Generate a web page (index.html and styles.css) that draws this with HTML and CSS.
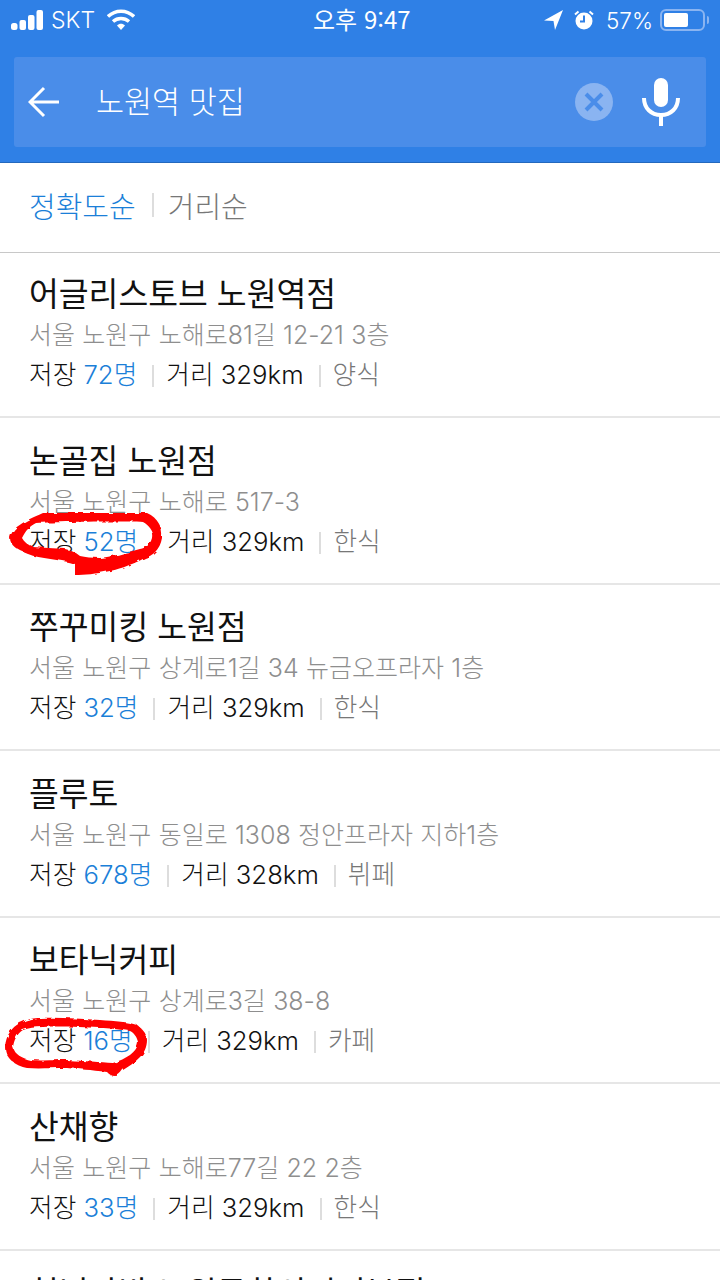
FILE: index.html
```html
<!DOCTYPE html>
<html lang="ko">
<head>
<meta charset="utf-8">
<title>노원역 맛집</title>
<link rel="stylesheet" href="styles.css">
</head>
<body>
<div class="phone">
  <header class="top">
    <div class="status">
      <div class="status-left">
        <svg class="signal" width="32" height="22" viewBox="0 0 32 22"><rect x="0" y="14" width="6.500" height="7" rx="2.500" fill="#fff"/><rect x="8.500" y="11" width="6.500" height="10" rx="2" fill="#fff"/><rect x="17" y="6" width="6.500" height="15" rx="2" fill="#fff"/><rect x="25.500" y="1" width="6.500" height="20" rx="2" fill="#fff"/></svg>
        <span class="carrier">SKT</span>
        <svg class="wifi" width="28" height="22" viewBox="0 0 28 22"><path d="M1 7.5C8.5 .5 19.5 .5 27 7.5" fill="none" stroke="#fff" stroke-width="3.4"/><path d="M6 12.5C10.5 8.5 17.5 8.5 22 12.5" fill="none" stroke="#fff" stroke-width="3.4"/><path d="M10 16.5C12.5 14 15.5 14 18 16.5L14 21Z" fill="#fff"/></svg>
      </div>
      <div class="clock">오후 9:47</div>
      <div class="status-right">
        <svg width="20" height="20" viewBox="0 0 20 20"><path d="M0 10.5 19 0 11 20 9.500 11Z" fill="#fff"/></svg>
        <svg class="alarm" width="20" height="20" viewBox="0 0 20 20"><circle cx="10" cy="11" r="8.500" fill="#fff"/><path d="M10 5.500V11.500H6" fill="none" stroke="#2f80e6" stroke-width="2"/><path d="M1 4.500 4.500 1.500M19 4.500 15.500 1.500" stroke="#fff" stroke-width="2"/></svg>
        <span class="pct">57%</span>
        <div class="battery"><div class="battery-fill"></div></div>
        <div class="battery-tip"></div>
      </div>
    </div>
    <div class="search">
      <svg class="back" width="32" height="32" viewBox="0 0 32 32"><path d="M31 16H3M16 2 2 16 16 30" fill="none" stroke="#fff" stroke-width="3"/></svg>
      <span class="query">노원역 맛집</span>
      <svg class="clear" width="38" height="38" viewBox="0 0 38 38"><circle cx="19" cy="19" r="19" fill="#8ab4f1"/><path d="M11 11 27 27M27 11 11 27" stroke="#4a8de9" stroke-width="4"/></svg>
      <svg class="mic" width="38" height="48" viewBox="0 0 38 48"><rect x="12" y="0" width="14" height="29" rx="7" fill="#fff"/><path d="M2 20C2 30 9 37 19 37S36 30 36 20" fill="none" stroke="#fff" stroke-width="4"/><rect x="17" y="36" width="4" height="12" fill="#fff"/></svg>
    </div>
  </header>

  <nav class="sort">
    <span class="sort-on">정확도순</span>
    <i class="bar"></i>
    <span class="sort-off">거리순</span>
  </nav>

  <main class="list">
    <article class="row">
      <h2>어글리스토브 노원역점</h2>
      <p class="addr">서울 노원구 노해로81길 12-21 3층</p>
      <p class="meta">저장 <b>72명</b><i class="bar"></i>거리 329km<i class="bar"></i><span>양식</span></p>
    </article>
    <article class="row">
      <h2>논골집 노원점</h2>
      <p class="addr">서울 노원구 노해로 517-3</p>
      <p class="meta">저장 <b>52명</b><i class="bar"></i>거리 329km<i class="bar"></i><span>한식</span></p>
    </article>
    <article class="row">
      <h2>쭈꾸미킹 노원점</h2>
      <p class="addr">서울 노원구 상계로1길 34 뉴금오프라자 1층</p>
      <p class="meta">저장 <b>32명</b><i class="bar"></i>거리 329km<i class="bar"></i><span>한식</span></p>
    </article>
    <article class="row">
      <h2>플루토</h2>
      <p class="addr">서울 노원구 동일로 1308 정안프라자 지하1층</p>
      <p class="meta">저장 <b>678명</b><i class="bar"></i>거리 328km<i class="bar"></i><span>뷔페</span></p>
    </article>
    <article class="row">
      <h2>보타닉커피</h2>
      <p class="addr">서울 노원구 상계로3길 38-8</p>
      <p class="meta">저장 <b>16명</b><i class="bar"></i>거리 329km<i class="bar"></i><span>카페</span></p>
    </article>
    <article class="row">
      <h2>산채향</h2>
      <p class="addr">서울 노원구 노해로77길 22 2층</p>
      <p class="meta">저장 <b>33명</b><i class="bar"></i>거리 329km<i class="bar"></i><span>한식</span></p>
    </article>
    <article class="row">
      <h2>청년다방 노원문화의거리본점</h2>
    </article>
  </main>

  <svg class="scribble" width="720" height="1280" viewBox="0 0 720 1280">
    <defs>
      <filter id="rough" x="-5%" y="-5%" width="110%" height="110%">
        <feTurbulence type="fractalNoise" baseFrequency="0.12" numOctaves="2" seed="4"/>
        <feDisplacementMap in="SourceGraphic" scale="4"/>
      </filter>
    </defs>
    <g filter="url(#rough)" fill="#f00" fill-rule="evenodd">
      <path d="M10 538C12 528 22 522 43 513L147 513C158 518 163 528 162 538C160 550 152 556 145 558C130 566 115 570 110 571C95 574 85 575 75 575L75 564C60 559 40 559 28 554C18 550 10 546 10 538ZM22 538C26 530 30 526 36 523C60 522 120 521 143 522C150 526 153 532 152 538C150 545 146 548 140 549C125 553 110 557 100 558C92 558 85 557 80 556C75 552 70 550 65 549C55 548 42 548 33 547C28 545 24 542 22 538Z"/>
      <path d="M5 1047C6 1035 12 1027 20 1023C28 1019 34 1018 40 1018C60 1017 80 1019 100 1020C115 1021 128 1022 137 1025C144 1030 147 1035 147 1040C147 1047 144 1053 140 1057C134 1063 128 1067 123 1070C120 1074 118 1076 115 1076C111 1076 109 1074 107 1072C90 1070 80 1069 67 1068C50 1068 38 1069 27 1068C16 1066 5 1058 5 1047ZM13 1047C15 1055 22 1058 30 1060C45 1061 55 1060 67 1060C85 1061 100 1062 113 1063C120 1061 125 1058 130 1055C135 1051 138 1047 138 1042C137 1037 134 1033 130 1031C115 1029 110 1028 100 1028C80 1027 60 1026 43 1027C35 1027 28 1028 23 1030C17 1034 14 1040 13 1047Z"/>
    </g>
  </svg>
</div>
</body>
</html>
```
FILE: styles.css
```css
* { box-sizing: border-box; }
html, body { margin: 0; padding: 0; }
body { background: #fff; font-family: "Noto Sans CJK KR", "Noto Sans", sans-serif; }
.phone { position: relative; width: 720px; height: 1280px; overflow: hidden; background: #fff; }

.top { height: 163px; background: #2f80e6; border-bottom: 1px solid #2468bd; display: flex; flex-direction: column; }
.status { height: 57px; padding: 0 11px 17px 11px; display: flex; align-items: center; justify-content: space-between; color: #fff; position: relative; }
.status-left { display: flex; align-items: center; gap: 7px; width: 180px; }
.carrier { font-family: "Inter", sans-serif; font-size: 23px; font-weight: 300; margin-left: 1px; }
.wifi { margin-left: 5px; }
.clock { font-size: 24px; font-weight: 400; position: absolute; left: 313px; top: 3px; line-height: 32px; }
.status-right { display: flex; align-items: center; gap: 0; }
.alarm { margin-left: 10px; }
.pct { font-family: "Inter", sans-serif; font-size: 22.500px; font-weight: 300; margin-left: 12px; }
.battery { width: 45px; height: 22px; border: 2px solid #8ab4f1; border-radius: 6px; margin-left: 7px; padding: 2px; }
.battery-fill { width: 24px; height: 100%; background: #fff; border-radius: 2px; }
.battery-tip { width: 2px; height: 8px; background: #8ab4f1; margin-left: 2px; border-radius: 0 2px 2px 0; }

.search { margin: 0 14px; height: 90px; background: #4a8de9; border-radius: 3px; display: flex; align-items: center; padding: 0 26px 0 14px; }
.back { margin-right: 36px; }
.query { flex: 1; color: #fff; font-size: 30.500px; font-weight: 300; position: relative; top: -2px; }
.clear { margin-right: 29px; }

.sort { height: 90px; border-bottom: 1px solid #c8c8c8; display: flex; align-items: center; padding: 0 29px 5px; font-size: 29px; font-weight: 300; }
.sort-on { color: #1b7fd8; }
.sort-off { color: #777; }
.sort .bar { height: 24px; margin: 0 14px 0 16px; background: #ddd; }

.bar { display: inline-block; width: 2px; height: 22px; background: #ddd; margin: 0 12px 0 15px; vertical-align: -3px; }

.row { height: 166.500px; border-bottom: 2px solid #e6e6e6; padding: 16.500px 29px 0; overflow: hidden; }
.row:first-child { height: 165px; padding-top: 14.500px; }
.row:first-child h2 { margin-bottom: 1px; }
.row h2 { margin: 0; font-size: 32.400px; font-weight: 400; color: #111; line-height: 48px; }
.addr { margin: 1px 0 0; font-family: "Inter", "Noto Sans CJK KR", sans-serif; font-size: 25px; word-spacing: .3px; color: #8e8e8e; line-height: 36px; font-weight: 300; }
.meta { margin: 2px 0 0; font-family: "Inter", "Noto Sans CJK KR", sans-serif; font-size: 25.700px; color: #111; line-height: 40px; white-space: nowrap; font-weight: 300; }
.meta b { font-weight: 300; color: #1b7fd8; }
.meta span { color: #777; }

.scribble { position: absolute; left: 0; top: 0; pointer-events: none; }
```
